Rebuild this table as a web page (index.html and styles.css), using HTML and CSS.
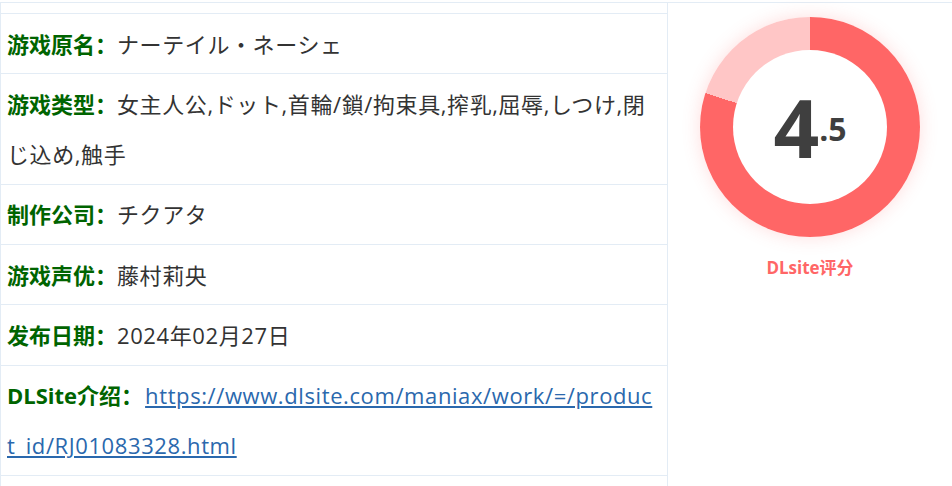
FILE: index.html
```html
<!DOCTYPE html>
<html lang="zh">
<head>
<meta charset="utf-8">
<link rel="stylesheet" href="styles.css">
</head>
<body>
<div class="info">
  <div class="details">
    <div class="row"><span class="label">游戏原名：</span>ナーテイル・ネーシェ</div>
    <div class="row"><span class="label">游戏类型：</span>女主人公,ドット,首輪/鎖/拘束具,搾乳,屈辱,しつけ,閉じ込め,触手</div>
    <div class="row"><span class="label">制作公司：</span>チクアタ</div>
    <div class="row"><span class="label">游戏声优：</span>藤村莉央</div>
    <div class="row"><span class="label">发布日期：</span>2024年02月27日</div>
    <div class="row"><span class="label">DLSite介绍：</span><a class="link" href="#">https://www.dlsite.com/maniax/work/=/product_id/RJ01083328.html</a></div>
  </div>
  <div class="score">
    <div class="ring">
      <div class="hole"><span class="big">4</span><span class="small">.5</span></div>
    </div>
    <div class="caption">DLsite评分</div>
  </div>
</div>
</body>
</html>
```
FILE: styles.css
```css
html, body {
  margin: 0;
  padding: 0;
  background: #fff;
}
body {
  padding-top: 2px;
  height: 484px;
  overflow: hidden;
  font-family: "Open Sans", "Noto Sans CJK SC", "Noto Sans CJK JP", sans-serif;
}
.info {
  display: grid;
  grid-template-columns: 668px 1fr;
  border-top: 1px solid #e3ecf5;
  height: 483px;
}
.details {
  border-left: 1px solid #e3ecf5;
  border-right: 1px solid #e3ecf5;
  padding-top: 10px;
}
.row {
  border-top: 1px solid #e3ecf5;
  padding: 4.67px 10px 4.67px 6px;
  font-size: 22px;
  line-height: 50px;
  color: #333;
  letter-spacing: 0.6px;
  word-break: break-all;
}
.row:last-child {
  border-bottom: 1px solid #e3ecf5;
}
.label {
  font-weight: 700;
  color: #006400;
  letter-spacing: 0;
}
.link {
  color: #2a68ad;
  text-decoration: underline;
  margin-left: 2px;
}
.score {
  display: flex;
  flex-direction: column;
  align-items: center;
  padding-top: 14px;
}
.ring {
  width: 220px;
  height: 220px;
  border-radius: 50%;
  background: conic-gradient(#ff6666 0 80%, #ffc6c6 80% 100%);
  box-shadow: 0 0 18px rgba(255, 102, 102, 0.22);
  display: flex;
  align-items: center;
  justify-content: center;
}
.hole {
  width: 154px;
  height: 154px;
  border-radius: 50%;
  background: #fff;
  display: flex;
  align-items: center;
  justify-content: center;
  color: #3f3f3f;
  font-family: "Open Sans", "Noto Sans", sans-serif;
  font-weight: 700;
}
.big {
  font-size: 80px;
  line-height: 1;
}
.small {
  font-size: 32px;
  line-height: 1;
  align-self: center;
  margin-top: 4px;
}
.caption {
  margin-top: 17px;
  font-size: 17px;
  font-weight: 700;
  color: #ff6666;
  font-family: "Open Sans", "Noto Sans CJK SC", sans-serif;
}
```
